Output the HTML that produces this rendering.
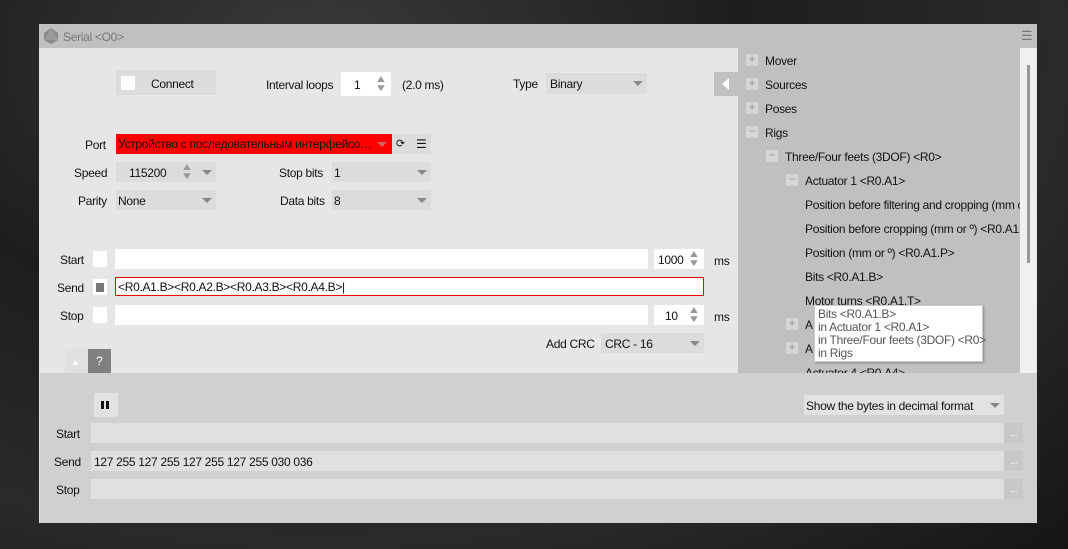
<!DOCTYPE html>
<html><head><meta charset="utf-8"><style>
*{margin:0;padding:0;box-sizing:border-box}
body{width:1068px;height:549px;overflow:hidden;position:relative;font-family:"Liberation Sans",sans-serif;font-size:12px;letter-spacing:-0.3px;color:#111;
background:radial-gradient(ellipse at 30% 10%,#3a3a3a,#1e1e1e 40%,#2a2a2a 70%,#151515);}
div,span{position:absolute}
.t{white-space:nowrap;line-height:14px}
.w{background:#fff}
.g{background:#dcdcdc}
.arr{width:0;height:0;border-left:5px solid transparent;border-right:5px solid transparent;border-top:5px solid #888}
.pb{width:12px;height:12px;background:#d6d6d6;color:#999;font-size:12px;line-height:11px;text-align:center}
.dots{background:#c8c8c8;color:#fff;font-size:10px;text-align:center;line-height:22px;width:19px;height:19px}
.sp{color:#999;font-size:10px;line-height:9px;transform:scaleX(1.3)}
</style></head><body>
<div style="left:39px;top:24px;width:998px;height:499px;background:#e6e6e6"></div>
<div style="left:39px;top:24px;width:998px;height:24px;background:#c0c0c0"></div>
<svg style="position:absolute;left:42px;top:27px" width="18" height="18"><polygon points="9,1 16,6 16,13 9,17 2,13 2,6" fill="#8a8a8a"/><polygon points="9,1 16,13 2,13" fill="#9a9a9a"/></svg>
<div class="t" style="left:63px;top:30px;color:#777">Serial &lt;O0&gt;</div>
<div class="t" style="left:1021px;top:29px;color:#777;font-size:13px">☰</div>

<div style="left:738px;top:48px;width:282px;height:325px;background:#c0c0c0"></div>
<div style="left:1020px;top:48px;width:16px;height:325px;background:#f0f0f0"></div>
<div style="left:1027px;top:65px;width:3px;height:198px;background:#999"></div>
<div style="left:714px;top:72px;width:24px;height:24px;background:#c0c0c0"></div>
<div style="left:722px;top:78px;width:0;height:0;border-top:6px solid transparent;border-bottom:6px solid transparent;border-right:7px solid #fff"></div>

<div class="pb" style="left:746px;top:54px">+</div><div class="t" style="left:765px;top:54px">Mover</div>
<div class="pb" style="left:746px;top:78px">+</div><div class="t" style="left:765px;top:78px">Sources</div>
<div class="pb" style="left:746px;top:102px">+</div><div class="t" style="left:765px;top:102px">Poses</div>
<div class="pb" style="left:746px;top:126px">−</div><div class="t" style="left:765px;top:126px">Rigs</div>
<div class="pb" style="left:766px;top:150px">−</div><div class="t" style="left:785px;top:150px">Three/Four feets (3DOF) &lt;R0&gt;</div>
<div class="pb" style="left:786px;top:174px">−</div><div class="t" style="left:805px;top:174px">Actuator 1 &lt;R0.A1&gt;</div>
<div style="left:805px;top:198px;width:215px;height:100px;overflow:hidden">
<div class="t" style="left:0;top:0">Position before filtering and cropping (mm or º) &lt;R0.A1.PBF&gt;</div>
<div class="t" style="left:0;top:24px">Position before cropping (mm or º) &lt;R0.A1.PBC&gt;</div>
<div class="t" style="left:0;top:48px">Position (mm or º) &lt;R0.A1.P&gt;</div>
<div class="t" style="left:0;top:72px">Bits &lt;R0.A1.B&gt;</div>
</div>
<div class="t" style="left:805px;top:294px">Motor turns &lt;R0.A1.T&gt;</div>
<div class="pb" style="left:786px;top:318px">+</div><div class="t" style="left:805px;top:318px">A</div>
<div class="pb" style="left:786px;top:342px">+</div><div class="t" style="left:805px;top:342px">A</div>
<div style="left:786px;top:366px;width:234px;height:7px;overflow:hidden"><div class="t" style="left:19px;top:0">Actuator 4 &lt;R0.A4&gt;</div></div>
<div style="left:814px;top:305px;width:169px;height:57px;background:#fff;border:1px solid #ccc;box-shadow:1px 1px 2px #888"></div>
<div class="t" style="left:818px;top:308px;color:#555;line-height:13px">Bits &lt;R0.A1.B&gt;<br>in Actuator 1 &lt;R0.A1&gt;<br>in Three/Four feets (3DOF) &lt;R0&gt;<br>in Rigs</div>

<div class="g" style="left:116px;top:70px;width:100px;height:25px"></div>
<div class="w" style="left:121px;top:76px;width:14px;height:14px"></div>
<div class="t" style="left:151px;top:77px">Connect</div>
<div class="t" style="left:266px;top:78px">Interval loops</div>
<div class="w" style="left:341px;top:72px;width:50px;height:24px"></div>
<div class="t" style="left:354px;top:78px">1</div>
<div class="t sp" style="left:376px;top:75px">▲<br>▼</div>
<div class="t" style="left:402px;top:78px">(2.0 ms)</div>
<div class="t" style="left:513px;top:77px">Type</div>
<div class="g" style="left:546px;top:73px;width:101px;height:21px"></div>
<div class="t" style="left:550px;top:77px">Binary</div>
<div class="arr" style="left:633px;top:81px"></div>

<div class="t" style="left:85px;top:138px">Port</div>
<div style="left:116px;top:134px;width:276px;height:20px;background:#f00"></div>
<div class="t" style="left:118px;top:137px;width:255px;overflow:hidden;text-overflow:ellipsis">Устройство с последовательным интерфейсом (COM3)</div>
<div class="arr" style="left:377px;top:142px;border-top-color:#c66"></div>
<div class="g" style="left:392px;top:134px;width:39px;height:20px"></div>
<div class="t" style="left:396px;top:137px;font-size:11px">⟳</div>
<div class="t" style="left:416px;top:137px">☰</div>

<div class="t" style="left:74px;top:166px">Speed</div>
<div class="g" style="left:116px;top:162px;width:100px;height:20px"></div>
<div class="t" style="left:129px;top:166px">115200</div>
<div class="t sp" style="left:182px;top:163px">▲<br>▼</div>
<div class="arr" style="left:202px;top:170px"></div>
<div class="t" style="left:279px;top:166px">Stop bits</div>
<div class="g" style="left:332px;top:162px;width:99px;height:20px"></div>
<div class="t" style="left:334px;top:166px">1</div>
<div class="arr" style="left:417px;top:170px"></div>
<div class="t" style="left:78px;top:194px">Parity</div>
<div class="g" style="left:116px;top:190px;width:100px;height:20px"></div>
<div class="t" style="left:118px;top:194px">None</div>
<div class="arr" style="left:202px;top:198px"></div>
<div class="t" style="left:280px;top:194px">Data bits</div>
<div class="g" style="left:332px;top:190px;width:99px;height:20px"></div>
<div class="t" style="left:334px;top:194px">8</div>
<div class="arr" style="left:417px;top:198px"></div>

<div class="t" style="left:60px;top:253px">Start</div>
<div class="w" style="left:93px;top:251px;width:14px;height:16px"></div>
<div class="w" style="left:115px;top:249px;width:533px;height:20px"></div>
<div class="w" style="left:654px;top:249px;width:50px;height:20px"></div>
<div class="t" style="left:658px;top:253px">1000</div>
<div class="t sp" style="left:689px;top:250px">▲<br>▼</div>
<div class="t" style="left:714px;top:254px">ms</div>
<div class="t" style="left:57px;top:281px">Send</div>
<div class="w" style="left:93px;top:279px;width:14px;height:16px"></div>
<div style="left:96px;top:283px;width:8px;height:9px;background:#777"></div>
<div class="w" style="left:115px;top:277px;width:589px;height:19px;border:1px solid #e00"></div>
<div class="t" style="left:118px;top:280px">&lt;R0.A1.B&gt;&lt;R0.A2.B&gt;&lt;R0.A3.B&gt;&lt;R0.A4.B&gt;|</div>
<div class="t" style="left:60px;top:309px">Stop</div>
<div class="w" style="left:93px;top:307px;width:14px;height:16px"></div>
<div class="w" style="left:115px;top:305px;width:533px;height:20px"></div>
<div class="w" style="left:654px;top:305px;width:50px;height:20px"></div>
<div class="t" style="left:665px;top:309px">10</div>
<div class="t sp" style="left:689px;top:306px">▲<br>▼</div>
<div class="t" style="left:714px;top:310px">ms</div>
<div class="t" style="left:546px;top:337px">Add CRC</div>
<div class="g" style="left:601px;top:333px;width:103px;height:20px"></div>
<div class="t" style="left:605px;top:337px">CRC - 16</div>
<div class="arr" style="left:690px;top:341px"></div>
<div style="left:65px;top:349px;width:23px;height:24px;background:#e0e0e0"></div>
<div class="t" style="left:71px;top:355px;color:#fff;font-size:9px">▲</div>
<div style="left:88px;top:349px;width:23px;height:24px;background:#808080"></div>
<div class="t" style="left:96px;top:354px;color:#fff">?</div>

<div style="left:40px;top:373px;width:997px;height:150px;background:#d0d0d0"></div>
<div style="left:94px;top:393px;width:24px;height:24px;background:#e2e2e2"></div>
<div style="left:101px;top:401px;width:3px;height:8px;background:#111"></div>
<div style="left:106px;top:401px;width:3px;height:8px;background:#111"></div>
<div style="left:804px;top:395px;width:200px;height:20px;background:#e2e2e2"></div>
<div class="t" style="left:806px;top:399px">Show the bytes in decimal format</div>
<div class="arr" style="left:990px;top:403px"></div>
<div class="t" style="left:56px;top:427px">Start</div>
<div style="left:91px;top:423px;width:913px;height:20px;background:#e0e0e0"></div>
<div class="dots" style="left:1004px;top:423px;height:20px">...</div>
<div class="t" style="left:54px;top:455px">Send</div>
<div style="left:91px;top:451px;width:913px;height:20px;background:#e0e0e0"></div>
<div class="t" style="left:94px;top:455px">127 255 127 255 127 255 127 255 030 036</div>
<div class="dots" style="left:1004px;top:451px;height:20px">...</div>
<div class="t" style="left:56px;top:483px">Stop</div>
<div style="left:91px;top:479px;width:913px;height:20px;background:#e0e0e0"></div>
<div class="dots" style="left:1004px;top:479px;height:20px">...</div>
</body></html>
